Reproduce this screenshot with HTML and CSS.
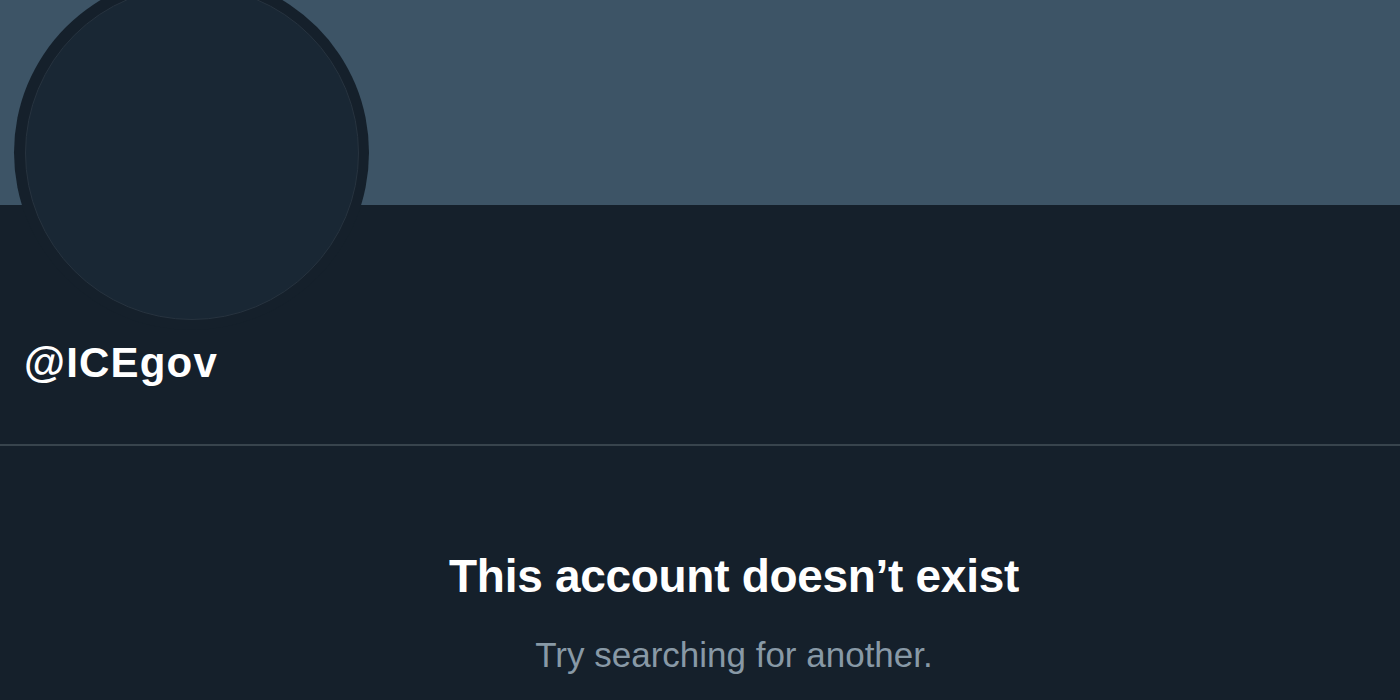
FILE: index.html
```html
<!DOCTYPE html>
<html lang="en">

<head>
  <meta charset="UTF-8">
  <meta name="viewport" content="width=device-width, initial-scale=1.0">
  <title>@ICEgov</title>
  <link rel="stylesheet" href="styles.css">
</head>

<body>
  <!-- Profile header -->
  <header class="profile">
    <div class="banner"></div>
    <div class="avatar">
      <div class="avatar-inner"></div>
    </div>
    <div class="profile-info">
      <h2 class="handle">@ICEgov</h2>
    </div>
  </header>

  <!-- Empty state -->
  <main class="empty-state">
    <h1 class="empty-title">This account doesn’t exist</h1>
    <p class="empty-text">Try searching for another.</p>
  </main>
</body>

</html>
```

FILE: styles.css
```css
/* Page base */
body {
  margin: 0;
  background-color: #15202b;
  color: #fff;
  font-family: "Liberation Sans", Arial, sans-serif;
  overflow: hidden;
}

/* Styling for profile header */
.profile {
  position: relative;
  border-bottom: 2px solid #38444d;
}

.banner {
  height: 205px;
  background-color: #3d5466;
}

/* Avatar sits over the banner */
.avatar {
  position: absolute;
  left: 14px;
  top: -25px;
  width: 355px;
  height: 355px;
  border-radius: 50%;
  background-color: #15202b;
  display: flex;
  align-items: center;
  justify-content: center;
}

.avatar-inner {
  width: 332px;
  height: 332px;
  border-radius: 50%;
  background-color: #192734;
  border: 1px solid #27333f;
}

.profile-info {
  padding: 134px 24px 0;
  height: 105px;
}

.handle {
  margin: 0;
  font-size: 42px;
  line-height: 48px;
  font-weight: bold;
  letter-spacing: 1.2px;
}

/* Styling for empty state */
.empty-state {
  padding: 102px 0 0 68px;
  text-align: center;
}

.empty-title {
  margin: 0;
  font-size: 46px;
  line-height: 56px;
  font-weight: bold;
  letter-spacing: -0.3px;
}

.empty-text {
  margin: 30px 0 0;
  font-size: 35px;
  line-height: 42px;
  color: #8899a6;
}
```
